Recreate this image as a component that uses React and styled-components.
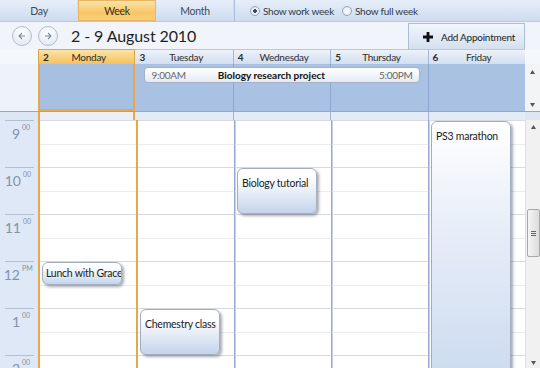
import React from "react";
import styled, { createGlobalStyle, css } from "styled-components";

const GlobalStyle = createGlobalStyle`
  html, body { margin: 0; padding: 0; background: #fff; }
  body { font-family: Lato, "Open Sans", sans-serif; }
`;

const HOUR = 47;
const START = 9;
const days = [
  { num: 2, name: "Monday", today: true },
  { num: 3, name: "Tuesday", afterToday: true },
  { num: 4, name: "Wednesday" },
  { num: 5, name: "Thursday" },
  { num: 6, name: "Friday" },
];
const hours = [9, 10, 11, 12, 1, 2];
const events = [
  { day: 0, title: "Lunch with Grace", from: 12, to: 12.5, center: true },
  { day: 1, title: "Chemestry class", from: 13, to: 14 },
  { day: 2, title: "Biology tutorial", from: 10, to: 11 },
  { day: 4, title: "PS3 marathon", from: 9, to: 15, light: true },
];

const Page = styled.div`
  width: 540px;
  height: 368px;
  overflow: hidden;
  display: flex;
  flex-direction: column;
  font-size: 10px;
  letter-spacing: -0.25px;
  color: #2a2a2a;
  white-space: nowrap;
`;

const TabBar = styled.div`
  height: 22px;
  display: flex;
  background: linear-gradient(#e6eef9, #cddcf0);
  border-bottom: 1px solid #b7c8e0;
  box-sizing: border-box;
`;

const Tab = styled.div`
  width: 78px;
  display: flex;
  align-items: center;
  justify-content: center;
  color: #3c4a5c;
  font-size: 10.5px;
  box-shadow: inset -1px 0 0 #d3def0;
  ${(p) =>
    p.$active &&
    css`
      background: linear-gradient(#fde6ad, #f8c566 60%, #f9d07e);
      box-shadow: inset 0 0 0 1px #e8b660;
      color: #3a2e10;
    `}
`;

const RadioGroup = styled.div`
  flex: 1;
  display: flex;
  align-items: center;
  gap: 8px;
  padding-left: 15px;
  border-left: 1px solid #a9bddb;
`;

const RadioLabel = styled.label`
  display: flex;
  align-items: center;
  gap: 3px;
  color: #2f3a48;
`;

const RadioDot = styled.span`
  width: 8px;
  height: 8px;
  border-radius: 50%;
  border: 1px solid #98a6bb;
  background: radial-gradient(circle, ${(p) => (p.$on ? "#3b4a60 30%, #f4f6fa 38%" : "#f4f6fa 40%")}, #cfd8e6);
`;

const NavRow = styled.div`
  height: 27px;
  display: flex;
  align-items: center;
  background: #f1f5fb;
  padding-left: 12px;
`;

const NavButton = styled.div`
  width: 18px;
  height: 18px;
  border-radius: 50%;
  border: 1px solid #b1bdcd;
  background: radial-gradient(circle at 50% 30%, #ffffff, #dde5f0);
  display: flex;
  align-items: center;
  justify-content: center;
  margin-right: 6px;
`;

const Title = styled.div`
  font-size: 16px;
  letter-spacing: -0.1px;
  color: #1e1e1e;
  margin-left: 7px;
  flex: 1;
`;

const AddButton = styled.div`
  width: 117px;
  height: 26px;
  box-sizing: border-box;
  margin-right: 15px;
  align-self: flex-end;
  display: flex;
  align-items: center;
  gap: 8px;
  padding-left: 14px;
  border: 1px solid #aabcd6;
  border-bottom: none;
  background: linear-gradient(#f2f6fc, #d4e0f0);
  color: #222;
`;

const Row = styled.div`
  display: grid;
  grid-template-columns: 38px repeat(5, 1fr) 15px;
`;

const HeaderRow = styled(Row)`
  height: 15px;
`;

const HeaderGap = styled.div`
  background: #f4f7fb;
`;

const DayHeader = styled.div`
  display: flex;
  align-items: center;
  padding-left: 4px;
  border-left: 1px solid #a7b8d6;
  border-top: 1px solid #b9c7de;
  color: #2c2c2c;
  background: ${(p) =>
    p.$today ? "linear-gradient(#fde4a6, #f6c05e)" : "linear-gradient(#edf2fa, #d3deef)"};
  ${(p) => p.$after && "border-left: none;"}
  ${(p) =>
    p.$today &&
    css`
      border: 1px solid #e0a441;
      border-bottom: none;
    `}
`;

const DayNum = styled.span`
  font-weight: 700;
  width: 14px;
`;

const DayName = styled.span`
  flex: 1;
  text-align: center;
  padding-right: 14px;
`;

const AllDayRow = styled(Row)`
  height: 47px;
  border-bottom: 1px solid #8ea7cf;
`;

const AllDayGutter = styled.div`
  grid-row: 1;
  grid-column: 1;
  background: #eef3fa;
`;

const AllDayCell = styled.div`
  grid-row: 1;
  background: #a9c2e3;
  border-left: 1px solid #8fa5cf;
  ${(p) => p.$after && "border-left: none;"}
  ${(p) =>
    p.$today &&
    css`
      border: 2px solid #e7a84a;
      border-top: none;
      background: #a7c0e2;
    `}
`;

const MiniScroll = styled.div`
  grid-row: 1;
  grid-column: 7;
  background: #f3f4f6;
  display: flex;
  flex-direction: column;
  justify-content: space-between;
  align-items: center;
  padding: 6px 0 4px;
`;

const AllDayEvent = styled.div`
  grid-row: 1;
  grid-column: 3 / 6;
  align-self: start;
  margin: 3px 8px 0 9px;
  height: 14px;
  border: 1px solid #a6b2c3;
  border-radius: 4px;
  background: linear-gradient(#ffffff, #e4ebf5);
  display: flex;
  align-items: center;
  padding: 0 6px;
  color: #333;
`;

const EventTime = styled.span`
  color: #666;
`;

const EventTitle = styled.span`
  flex: 1;
  text-align: center;
  font-weight: 700;
  letter-spacing: 0;
  color: #111;
  padding-right: 22px;
`;

const StripRow = styled(Row)`
  height: 8px;
  background: #dde7f4;
`;

const StripCell = styled.div`
  background: #e3ebf7;
  border-left: 1px solid #a3b4d6;
  ${(p) => p.$after && "border-left: none;"}
  ${(p) =>
    p.$today &&
    css`
      border-left: 2px solid #e7a84a;
      border-right: 2px solid #e7a84a;
      background: #eceef8;
    `}
`;

const Body = styled.div`
  flex: 1;
  display: flex;
  overflow: hidden;
`;

const Gutter = styled.div`
  width: 38px;
  background: #dee8f6;
  flex-shrink: 0;
`;

const GutterSlot = styled.div`
  height: ${HOUR}px;
  box-sizing: border-box;
  margin: 0 4px 0 5px;
  border-top: 1px solid #b3c0d2;
  display: flex;
  justify-content: flex-end;
  padding: 2px 3px 0 0;
  color: #8593a8;
  letter-spacing: 0;
`;

const HourNum = styled.span`
  font-size: 14px;
  line-height: 15px;
  margin-top: 3px;
`;

const HourSup = styled.span`
  font-size: 7px;
  margin-left: 2px;
  width: 9px;
`;

const DayColumn = styled.div`
  flex: 1;
  position: relative;
  border-left: 1px solid #95a9d6;
  box-shadow: inset 1px 0 0 #c6d0ea;
  ${(p) =>
    p.$after &&
    css`
      border-left: none;
      box-shadow: none;
    `}
  ${(p) =>
    p.$today &&
    css`
      border-left: 2px solid #e7a84a;
      border-right: 2px solid #e7a84a;
      box-shadow: none;
    `}
`;

const Slot = styled.div`
  height: ${HOUR}px;
  box-sizing: border-box;
  border-top: 1px solid #d7dae0;
  background: linear-gradient(
    transparent 23px,
    #eaecef 23px,
    #eaecef 24px,
    transparent 24px
  );
`;

const Event = styled.div`
  position: absolute;
  left: 2px;
  width: 80px;
  box-sizing: border-box;
  border: 1px solid #a3adbd;
  border-radius: 6px;
  background: ${(p) =>
    p.$light
      ? "linear-gradient(#ffffff, #e6edf8 40%, #c8d8ef)"
      : "linear-gradient(#ffffff 20%, #c4d4ec)"};
  box-shadow: 2px 2px 3px rgba(60, 70, 90, 0.45);
  padding: ${(p) => (p.$center ? "0 3px" : "8px 4px")};
  display: flex;
  align-items: ${(p) => (p.$center ? "center" : "flex-start")};
  font-size: 10.5px;
  color: #1c1c1c;
  overflow: hidden;
`;

const Scrollbar = styled.div`
  width: 15px;
  flex-shrink: 0;
  background: #f1f1f1;
  border-left: 1px solid #dedede;
  box-sizing: border-box;
  display: flex;
  flex-direction: column;
  align-items: center;
  padding: 5px 0 3px;
`;

const Thumb = styled.div`
  margin-top: 80px;
  width: 13px;
  height: 48px;
  border: 1px solid #a9a9a9;
  border-radius: 2px;
  box-sizing: border-box;
  background: linear-gradient(90deg, #f4f4f4, #dcdcdc);
  display: flex;
  flex-direction: column;
  align-items: center;
  justify-content: center;
  gap: 1px;
`;

const Grip = styled.div`
  width: 5px;
  height: 1px;
  background: #666;
`;

const Spacer = styled.div`
  flex: 1;
`;

const Arrow = ({ dir }) => (
  <svg width="10" height="10" viewBox="0 0 10 10">
    <path
      d={dir === "left" ? "M8 5H2M5 2L2 5l3 3" : "M2 5h6M5 2l3 3-3 3"}
      fill="none"
      stroke="#7d8aa0"
      strokeWidth="1.1"
    />
  </svg>
);

const Plus = () => (
  <svg width="10" height="10" viewBox="0 0 10 10">
    <path d="M3.6 0h2.8v3.6H10v2.8H6.4V10H3.6V6.4H0V3.6h3.6z" fill="#111" />
  </svg>
);

const Tri = ({ up }) => (
  <svg width="5" height="4" viewBox="0 0 5 4">
    <path d={up ? "M0 4L2.5 0 5 4z" : "M0 0h5L2.5 4z"} fill="#555" />
  </svg>
);

export default function App() {
  return (
    <Page>
      <GlobalStyle />
      <TabBar>
        <Tab>Day</Tab>
        <Tab $active>Week</Tab>
        <Tab>Month</Tab>
        <RadioGroup>
          <RadioLabel>
            <RadioDot $on />
            Show work week
          </RadioLabel>
          <RadioLabel>
            <RadioDot />
            Show full week
          </RadioLabel>
        </RadioGroup>
      </TabBar>

      <NavRow>
        <NavButton>
          <Arrow dir="left" />
        </NavButton>
        <NavButton>
          <Arrow dir="right" />
        </NavButton>
        <Title>2 - 9 August 2010</Title>
        <AddButton>
          <Plus />
          Add Appointment
        </AddButton>
      </NavRow>

      <HeaderRow>
        <HeaderGap />
        {days.map((d) => (
          <DayHeader key={d.num} $today={d.today} $after={d.afterToday}>
            <DayNum>{d.num}</DayNum>
            <DayName>{d.name}</DayName>
          </DayHeader>
        ))}
        <HeaderGap />
      </HeaderRow>

      <AllDayRow>
        <AllDayGutter />
        {days.map((d, i) => (
          <AllDayCell
            key={d.num}
            $today={d.today}
            $after={d.afterToday}
            style={{ gridColumn: i + 2 }}
          />
        ))}
        <MiniScroll>
          <Tri up />
          <Tri />
        </MiniScroll>
        <AllDayEvent>
          <EventTime>9:00AM</EventTime>
          <EventTitle>Biology research project</EventTitle>
          <EventTime>5:00PM</EventTime>
        </AllDayEvent>
      </AllDayRow>

      <StripRow>
        <div />
        {days.map((d) => (
          <StripCell key={d.num} $today={d.today} $after={d.afterToday} />
        ))}
        <div />
      </StripRow>

      <Body>
        <Gutter>
          {hours.map((h) => (
            <GutterSlot key={h}>
              <HourNum>{h}</HourNum>
              <HourSup>{h === 12 ? "PM" : "00"}</HourSup>
            </GutterSlot>
          ))}
        </Gutter>
        {days.map((d, di) => (
          <DayColumn key={d.num} $today={d.today} $after={d.afterToday}>
            {hours.map((h) => (
              <Slot key={h} />
            ))}
            {events
              .filter((e) => e.day === di)
              .map((e) => (
                <Event
                  key={e.title}
                  $light={e.light}
                  $center={e.center}
                  style={{
                    top: (e.from - START) * HOUR + 1,
                    height: (e.to - e.from) * HOUR - 1,
                  }}
                >
                  {e.title}
                </Event>
              ))}
          </DayColumn>
        ))}
        <Scrollbar>
          <Tri up />
          <Thumb>
            <Grip />
            <Grip />
            <Grip />
          </Thumb>
          <Spacer />
          <Tri />
        </Scrollbar>
      </Body>
    </Page>
  );
}
